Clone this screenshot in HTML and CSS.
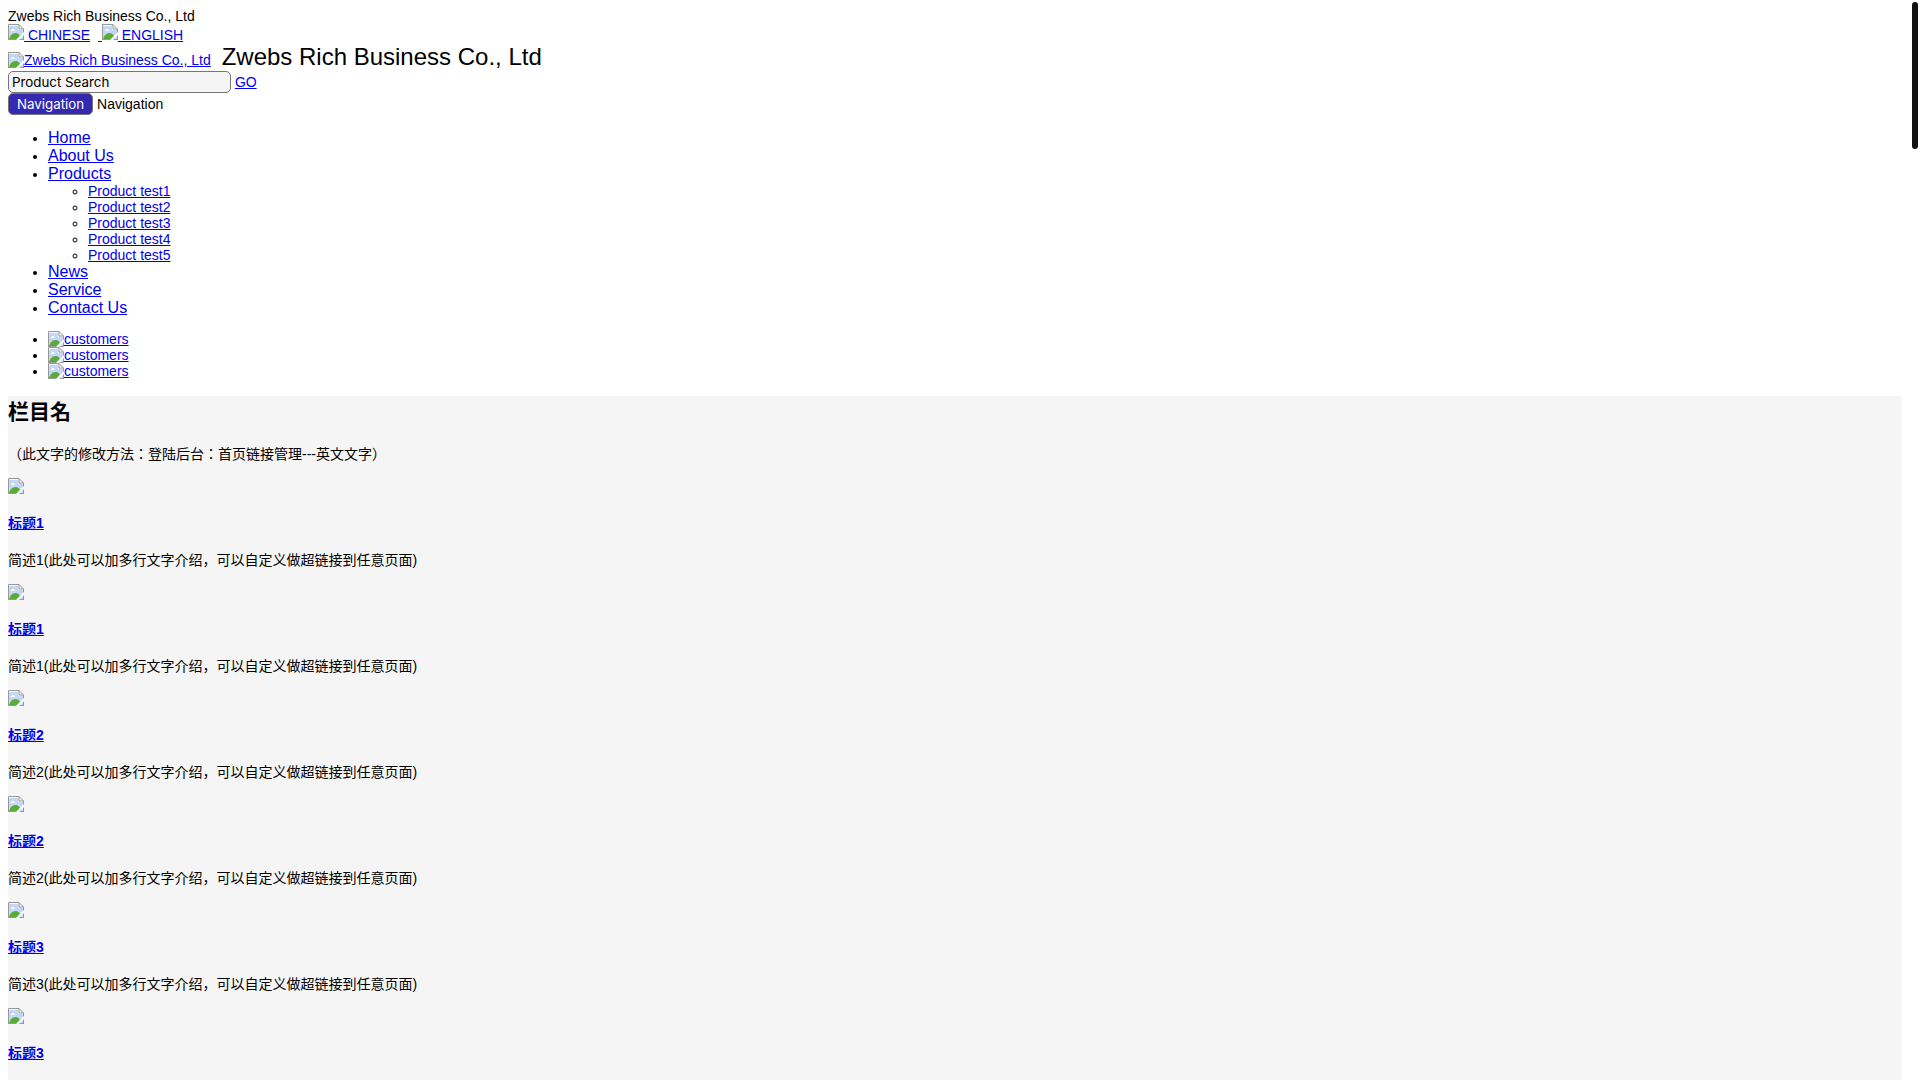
FILE: index.html
```html
<!DOCTYPE html>
<html lang="en">
<head>
    <meta charset="UTF-8">
    <meta name="viewport" content="width=device-width, initial-scale=1.0">
    <title>Zwebs Rich Business Co., Ltd</title>
    <link rel="stylesheet" href="styles.css">
</head>
<body>
    <!-- Shared picture placeholder -->
    <svg class="defs" width="0" height="0" aria-hidden="true">
        <symbol id="pic" viewBox="0 0 16 16">
            <path d="M0 0h11l5 5v11H0z" fill="#f4f7fc"/>
            <path d="M1 2h9v4h5v9H1z" fill="#c3d8f8"/>
            <path d="M3 7V6h1V5h2v1h1v1z" fill="#fff"/>
            <path d="M1 15c1-3 3-6 6.500-6 2.500 0 4 1.500 4.500 3l-3 3z" fill="#5aac38"/>
            <path d="M.5 15.500V.5H11l4.500 4.500v11M11 .5V5h4.500M0 15.500h16" fill="none" stroke="#999"/>
            <path d="M8 16l8-8v3l-5 5z" fill="#fff"/>
        </symbol>
    </svg>

    <!-- Header -->
    <header>
        <div>Zwebs Rich Business Co., Ltd</div>
        <div class="lang">
            <a href="#"><svg class="pic"><use href="#pic"/></svg> CHINESE</a>&nbsp;
            <a href="#">&nbsp;<svg class="pic"><use href="#pic"/></svg> ENGLISH</a>
        </div>
        <div class="logo">
            <a href="#"><svg class="pic pic-alt"><use href="#pic"/></svg>Zwebs Rich Business Co., Ltd</a>
            <span class="company">Zwebs Rich Business Co., Ltd</span>
        </div>
        <div class="search">
            <input type="text" value="Product Search" aria-label="Product Search">
            <a href="#">GO</a>
        </div>
        <div class="nav-toggle">
            <button type="button">Navigation</button>
            <span>Navigation</span>
        </div>
    </header>

    <!-- Menu -->
    <nav>
        <ul class="menu">
            <li><a href="#">Home</a></li>
            <li><a href="#">About Us</a></li>
            <li><a href="#">Products</a>
                <ul>
                    <li><a href="#">Product test1</a></li>
                    <li><a href="#">Product test2</a></li>
                    <li><a href="#">Product test3</a></li>
                    <li><a href="#">Product test4</a></li>
                    <li><a href="#">Product test5</a></li>
                </ul>
            </li>
            <li><a href="#">News</a></li>
            <li><a href="#">Service</a></li>
            <li><a href="#">Contact Us</a></li>
        </ul>
    </nav>

    <!-- Banner -->
    <ul class="banner">
        <li><a href="#"><svg class="pic pic-alt"><use href="#pic"/></svg>customers</a></li>
        <li><a href="#"><svg class="pic pic-alt"><use href="#pic"/></svg>customers</a></li>
        <li><a href="#"><svg class="pic pic-alt"><use href="#pic"/></svg>customers</a></li>
    </ul>

    <!-- Column -->
    <section class="column">
        <h2>栏目名</h2>
        <p>（此文字的修改方法：登陆后台：首页链接管理---英文文字）</p>
        <div class="item">
            <svg class="pic"><use href="#pic"/></svg>
            <h4><a href="#">标题1</a></h4>
            <p>简述1(此处可以加多行文字介绍，可以自定义做超链接到任意页面)</p>
        </div>
        <div class="item">
            <svg class="pic"><use href="#pic"/></svg>
            <h4><a href="#">标题1</a></h4>
            <p>简述1(此处可以加多行文字介绍，可以自定义做超链接到任意页面)</p>
        </div>
        <div class="item">
            <svg class="pic"><use href="#pic"/></svg>
            <h4><a href="#">标题2</a></h4>
            <p>简述2(此处可以加多行文字介绍，可以自定义做超链接到任意页面)</p>
        </div>
        <div class="item">
            <svg class="pic"><use href="#pic"/></svg>
            <h4><a href="#">标题2</a></h4>
            <p>简述2(此处可以加多行文字介绍，可以自定义做超链接到任意页面)</p>
        </div>
        <div class="item">
            <svg class="pic"><use href="#pic"/></svg>
            <h4><a href="#">标题3</a></h4>
            <p>简述3(此处可以加多行文字介绍，可以自定义做超链接到任意页面)</p>
        </div>
        <div class="item">
            <svg class="pic"><use href="#pic"/></svg>
            <h4><a href="#">标题3</a></h4>
        </div>
    </section>

    <div class="scroll-thumb"></div>
</body>
</html>
```

FILE: styles.css
```css
* {
    box-sizing: border-box;
}
body {
    display: flex;
    flex-direction: column;
    min-height: calc(100vh - 8px);
    margin: 8px 18px 0 8px;
    font-family: "Liberation Sans", "Noto Sans CJK JP", sans-serif;
    font-size: 14px;
    line-height: 16px;
    color: #000;
    background: #fff;
}
a {
    color: #0000ee;
    text-decoration: underline;
}
.defs {
    position: absolute;
}

/* Picture placeholder */
.pic {
    width: 16px;
    height: 16px;
    vertical-align: baseline;
}
.pic-alt {
    vertical-align: text-bottom;
}

/* Header */
.logo {
    padding-bottom: 1px;
}
.company {
    margin-left: 7px;
    font-size: 24px;
    line-height: 27px;
}
.search,
.nav-toggle {
    line-height: 22px;
}
.search input,
.nav-toggle button {
    height: 22px;
    border: 1px solid #767676;
    border-radius: 5px;
    font-family: Inter, sans-serif;
    vertical-align: top;
}
.search input {
    width: 223px;
    padding: 1px 3px;
    color: #000;
    background: #f5f5f5;
}
.nav-toggle button {
    padding: 1px 8px;
    color: #fff;
    background: #3529b1;
}

/* Menu */
ul {
    margin: 14px 0;
    padding-left: 40px;
}
.menu {
    margin-bottom: 0;
}
.menu > li > a {
    font-size: 16px;
    line-height: 18px;
}
.menu ul {
    margin: 0;
}
.banner {
    margin-bottom: 17px;
}

/* Column */
.column {
    flex: 1;
    background: #f5f5f5;
}
.column h2 {
    margin: 0 0 17px;
    font-size: 21px;
    line-height: 31px;
}
.column p {
    margin: 14px 0;
    line-height: 20px;
}
.column h4 {
    margin: 19px 0 17px;
    font-size: 14px;
    line-height: 20px;
}
.item .pic {
    display: block;
}

/* Scrollbar thumb */
.scroll-thumb {
    position: fixed;
    top: 2px;
    right: 2px;
    width: 6px;
    height: 147px;
    border-radius: 3px;
    background: #111;
}
```
